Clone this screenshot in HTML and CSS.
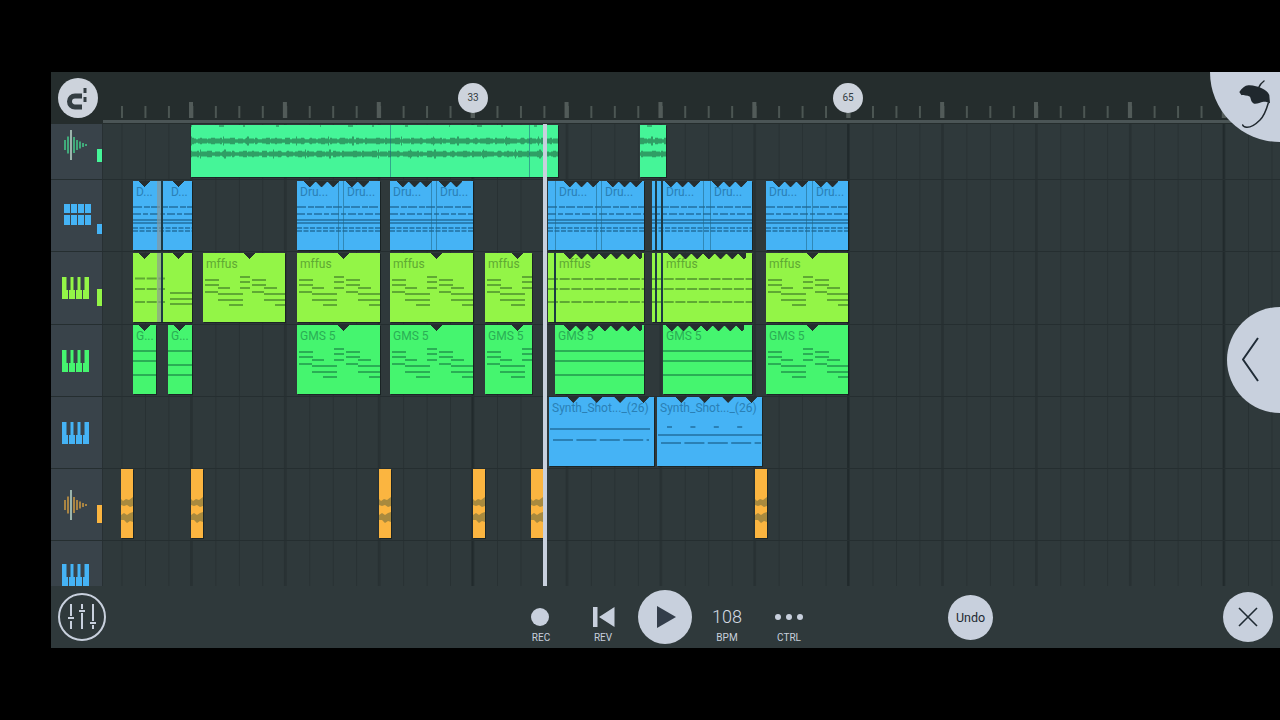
FILE: index.html
```html
<!DOCTYPE html>
<html lang="en">
<head>
<meta charset="utf-8">
<title>Playlist</title>
<link rel="stylesheet" href="styles.css">
</head>
<body>
<svg class="defs" aria-hidden="true">
  <defs>
    <g id="wave-band" fill="none" stroke="#2f9f65">
      <path d="M0 0H500" stroke-width="3.400"/>
      <path d="M0 0H500" stroke-width="5" stroke-dasharray="5 2 9 1 3 4 7 2 11 3"/>
      <path d="M0 0H500" stroke-width="6.500" stroke-dasharray="3 6 2 9 4 5 2 8 5 11"/>
      <path d="M0 0H500" stroke-width="9" stroke-dasharray="1 31 1 23 2 47"/>
    </g>
    <g id="wave">
      <path d="M0 1H500" fill="none" stroke="#2f9f65" stroke-width="1.500" stroke-dasharray="1 27 5 19 2 31 3 41"/>
      <use href="#wave-band" x="0" y="16"/>
      <use href="#wave-band" x="-23" y="29"/>
    </g>
    <g id="thump" fill="#a98a3e">
      <path d="M0 30L2 32L5 30L8 31L12 28V37L9 38L6 36L3 37L0 36Z"/>
      <path d="M0 46L3 44L6 46L9 44L12 43V53L9 52L6 54L3 51L0 51Z"/>
    </g>
    <g id="melody" fill="currentColor">
      <rect x="2" y="26" width="14" height="2"/><rect x="2" y="31" width="14" height="2"/><rect x="2" y="38" width="13" height="2"/>
      <rect x="15" y="34" width="12" height="2"/><rect x="15" y="40" width="25" height="2"/><rect x="15" y="46" width="25" height="2"/><rect x="26" y="51" width="14" height="2"/>
      <rect x="37" y="23" width="10" height="2"/><rect x="37" y="28" width="10" height="2"/><rect x="37" y="34" width="10" height="2"/>
      <rect x="49" y="26" width="14" height="2"/><rect x="49" y="31" width="14" height="2"/><rect x="49" y="38" width="12" height="2"/>
      <rect x="61" y="34" width="13" height="2"/><rect x="61" y="40" width="22" height="2"/><rect x="61" y="46" width="22" height="2"/><rect x="72" y="51" width="11" height="2"/>
    </g>
    <g id="three-dash" fill="none" stroke="currentColor" stroke-width="2" stroke-dasharray="10 1.7">
      <path d="M0 26H120"/><path d="M0 36H120"/><path d="M0 49H120"/>
    </g>
    <g id="three-solid" fill="none" stroke="currentColor" stroke-width="2">
      <path d="M0 26H120"/><path d="M0 36H120"/><path d="M0 50H120"/>
    </g>
    <g id="drums" fill="none" stroke="currentColor">
      <path d="M0 26H120" stroke-width="2" stroke-dasharray="9 2 6 1"/>
      <path d="M0 33H120" stroke-width="2.200" stroke-dasharray="8 2 5 2"/>
      <path d="M0 39H120" stroke-width="2"/>
      <path d="M0 42H120" stroke-width="2"/>
      <path d="M0 47H120" stroke-width="2" stroke-dasharray="5 1.5"/>
      <path d="M0 50H120" stroke-width="2" stroke-dasharray="5 1.5"/>
    </g>
    <g id="piano">
      <path d="M0 0H6V22H0ZM7 0H13V22H7ZM14 0H20V22H14ZM21 0H27V22H21Z" fill="currentColor"/>
      <path d="M4.500 0H8.500V13H4.500ZM11.500 0H15.500V13H11.500ZM18.500 0H22.500V13H18.500Z" fill="#39434a"/>
    </g>
    <g id="sample" fill="none" stroke="currentColor" stroke-width="1.400">
      <path d="M1 10V20M4 6.500V23.500M10 7V23M13 10V20M16 11.500V18.500M19 13V17M22 14V16"/>
      <path d="M7 0V30" stroke="#c4e4d4"/>
    </g>
  </defs>
</svg>

<main class="app">
  <header class="topbar">
    <div class="snapcell">
      <button class="snap" aria-label="Snap">
        <svg width="40" height="40" viewBox="0 0 40 40"><path d="M24 18H17A5.500 5.500 0 0 0 17 29H24" fill="none" stroke="#333d42" stroke-width="5"/><path d="M25.500 10H28.500V15H25.500ZM25.500 19H28.500V24H25.500Z" fill="#333d42"/></svg>
      </button>
    </div>
    <div class="ruler">
      <span class="marker m33">33</span>
      <span class="marker m65">65</span>
    </div>
  </header>

  <section class="tracks">
    <div class="row first inset">
      <div class="head h-first t-mint">
        <svg class="ico" width="24" height="30"><use href="#sample"/></svg>
        <i class="lvl" style="top:25px;height:13px"></i>
      </div>
      <div class="lane">
        <div class="clip mint" style="left:88px;width:367px">
          <svg class="notes"><use href="#wave"/></svg>
          <div class="seg" style="width:200px"></div><div class="seg" style="width:139px"></div><div class="seg last"></div>
        </div>
        <div class="clip mint" style="left:537px;width:26px">
          <svg class="notes"><use href="#wave" x="-150"/></svg>
        </div>
      </div>
    </div>

    <div class="row inset">
      <div class="head t-blue">
        <svg class="ico pads" width="27" height="21" viewBox="0 0 27 21"><path d="M0 0H6V9H0ZM7 0H13V9H7ZM14 0H20V9H14ZM21 0H27V9H21ZM0 11H6V21H0ZM7 11H13V21H7ZM14 11H20V21H14ZM21 11H27V21H21Z" fill="currentColor"/></svg>
        <i class="lvl" style="top:44px;height:10px"></i>
      </div>
      <div class="lane">
        <div class="clip blue" style="left:30px;width:59px">
          <svg class="notes"><use href="#drums"/></svg>
          <i class="zig" style="left:6px"></i><i class="zig" style="left:40px"></i>
          <div class="seg plain" style="width:24px"><b>D...</b></div><i class="fade"></i><i class="dark"></i><div class="seg plain" style="width:5px"></div><div class="seg plain last"><b>D...</b></div>
        </div>
        <div class="clip blue" style="left:194px;width:83px">
          <svg class="notes"><use href="#drums"/></svg>
          <i class="zig tri" style="left:7px"></i><i class="zig pair" style="left:49px"></i>
          <div class="seg" style="width:42px"><b>Dru...</b></div><div class="seg" style="width:5px"></div><div class="seg last"><b>Dru...</b></div>
        </div>
        <div class="clip blue" style="left:287px;width:83px">
          <svg class="notes"><use href="#drums"/></svg>
          <i class="zig tri" style="left:7px"></i><i class="zig pair" style="left:49px"></i>
          <div class="seg" style="width:42px"><b>Dru...</b></div><div class="seg" style="width:5px"></div><div class="seg last"><b>Dru...</b></div>
        </div>
        <div class="clip blue" style="left:445px;width:96px">
          <svg class="notes"><use href="#drums"/></svg>
          <i class="zig tri" style="left:16px"></i><i class="zig tri" style="left:59px"></i>
          <div class="seg" style="width:8px"></div><div class="seg" style="width:41px"><b>Dru...</b></div><div class="seg" style="width:5px"></div><div class="seg last"><b>Dru...</b></div>
        </div>
        <div class="clip blue" style="left:549px;width:100px">
          <svg class="notes"><use href="#drums"/></svg>
          <i class="zig tri" style="left:13px"></i><i class="zig tri" style="left:60px"></i>
          <div class="seg plain" style="width:3px"></div><i class="dark"></i><div class="seg plain" style="width:4px"></div><i class="dark"></i><div class="seg" style="width:41px"><b>Dru...</b></div><div class="seg" style="width:7px"></div><div class="seg last"><b>Dru...</b></div>
        </div>
        <div class="clip blue" style="left:663px;width:82px">
          <svg class="notes"><use href="#drums"/></svg>
          <i class="zig tri" style="left:7px"></i><i class="zig pair" style="left:49px"></i>
          <div class="seg" style="width:41px"><b>Dru...</b></div><div class="seg" style="width:6px"></div><div class="seg last"><b>Dru...</b></div>
        </div>
      </div>
    </div>

    <div class="row tall inset">
      <div class="head t-lime">
        <svg class="ico" width="27" height="22"><use href="#piano"/></svg>
        <i class="lvl" style="top:37px;height:17px"></i>
      </div>
      <div class="lane">
        <div class="clip lime" style="left:30px;width:59px">
          <svg class="notes"><path d="M2 25.500H32M2 36H32M2 49H32" fill="none" stroke="currentColor" stroke-width="2" stroke-dasharray="10 1.700"/><path d="M37 40H59M37 46H59M37 51H59" fill="none" stroke="currentColor" stroke-width="2"/></svg>
          <i class="zig" style="left:6px"></i><i class="zig" style="left:40px"></i>
          <div class="seg plain" style="width:24px"></div><i class="fade"></i><i class="dark"></i>
        </div>
        <div class="clip lime" style="left:100px;width:82px"><svg class="notes"><use href="#melody"/></svg><i class="zig" style="left:41px"></i><b>mffus</b></div>
        <div class="clip lime" style="left:194px;width:83px"><svg class="notes"><use href="#melody"/></svg><i class="zig" style="left:41px"></i><b>mffus</b></div>
        <div class="clip lime" style="left:287px;width:83px"><svg class="notes"><use href="#melody"/></svg><i class="zig" style="left:41px"></i><b>mffus</b></div>
        <div class="clip lime" style="left:382px;width:47px"><svg class="notes"><use href="#melody"/></svg><i class="zig" style="left:27px"></i><b>mffus</b></div>
        <div class="clip lime" style="left:445px;width:96px">
          <svg class="notes"><use href="#three-dash"/></svg>
          <i class="zig long" style="left:16px"></i>
          <div class="seg plain" style="width:6px"></div><i class="dark"></i><div class="seg plain last"><b>mffus</b></div>
        </div>
        <div class="clip lime" style="left:549px;width:100px">
          <svg class="notes"><use href="#three-dash"/></svg>
          <i class="zig long" style="left:16px"></i>
          <div class="seg plain" style="width:3px"></div><i class="dark"></i><div class="seg plain" style="width:4px"></div><i class="dark"></i><div class="seg plain last"><b>mffus</b></div>
        </div>
        <div class="clip lime" style="left:663px;width:82px"><svg class="notes"><use href="#melody"/></svg><i class="zig" style="left:41px"></i><b>mffus</b></div>
      </div>
    </div>

    <div class="row">
      <div class="head t-green">
        <svg class="ico" width="27" height="22"><use href="#piano"/></svg>
      </div>
      <div class="lane">
        <div class="clip green" style="left:30px;width:23px"><svg class="notes"><path d="M0 26H23M0 36H23M0 50H23" fill="none" stroke="currentColor" stroke-width="2"/></svg><i class="zig" style="left:6px"></i><b>G...</b></div>
        <div class="clip green" style="left:65px;width:24px"><svg class="notes"><path d="M0 26H24M0 40H24M0 50H24" fill="none" stroke="currentColor" stroke-width="2"/></svg><i class="zig" style="left:6px"></i><b>G...</b></div>
        <div class="clip green" style="left:194px;width:83px"><svg class="notes"><use href="#melody"/></svg><i class="zig" style="left:41px"></i><b>GMS 5</b></div>
        <div class="clip green" style="left:287px;width:83px"><svg class="notes"><use href="#melody"/></svg><i class="zig" style="left:41px"></i><b>GMS 5</b></div>
        <div class="clip green" style="left:382px;width:47px"><svg class="notes"><use href="#melody"/></svg><i class="zig" style="left:27px"></i><b>GMS 5</b></div>
        <div class="clip green" style="left:452px;width:89px"><svg class="notes"><use href="#three-solid"/></svg><i class="zig long" style="left:9px"></i><b>GMS 5</b></div>
        <div class="clip green" style="left:560px;width:89px"><svg class="notes"><use href="#three-solid"/></svg><i class="zig long" style="left:3px"></i><b>GMS 5</b></div>
        <div class="clip green" style="left:663px;width:82px"><svg class="notes"><use href="#melody"/></svg><i class="zig" style="left:41px"></i><b>GMS 5</b></div>
      </div>
    </div>

    <div class="row">
      <div class="head t-blue">
        <svg class="ico" width="27" height="22"><use href="#piano"/></svg>
      </div>
      <div class="lane">
        <div class="clip blue" style="left:446px;width:105px">
          <svg class="notes"><path d="M1 32H101" fill="none" stroke="currentColor" stroke-width="2"/><path d="M4 43H100" fill="none" stroke="currentColor" stroke-width="2" stroke-dasharray="20 3.400"/></svg>
          <i class="zig beats" style="left:18px"></i><b>Synth_Shot..._(26)</b>
        </div>
        <div class="clip blue" style="left:554px;width:105px">
          <svg class="notes"><path d="M10 30H100" fill="none" stroke="currentColor" stroke-width="2" stroke-dasharray="5 18.400"/><path d="M1 38H105" fill="none" stroke="currentColor" stroke-width="2"/><path d="M4 46H104" fill="none" stroke="currentColor" stroke-width="2" stroke-dasharray="20 3.400"/></svg>
          <i class="zig beats" style="left:18px"></i><b>Synth_Shot..._(26)</b>
        </div>
      </div>
    </div>

    <div class="row">
      <div class="head t-amber">
        <svg class="ico" width="24" height="30"><use href="#sample"/></svg>
        <i class="lvl" style="top:36px;height:18px"></i>
      </div>
      <div class="lane">
        <div class="clip amber" style="left:18px;width:12px"><svg class="notes"><use href="#thump"/></svg></div>
        <div class="clip amber" style="left:88px;width:12px"><svg class="notes"><use href="#thump"/></svg></div>
        <div class="clip amber" style="left:276px;width:12px"><svg class="notes"><use href="#thump"/></svg></div>
        <div class="clip amber" style="left:370px;width:12px"><svg class="notes"><use href="#thump"/></svg></div>
        <div class="clip amber" style="left:428px;width:12px"><svg class="notes"><use href="#thump"/></svg></div>
        <div class="clip amber" style="left:652px;width:12px"><svg class="notes"><use href="#thump"/></svg></div>
      </div>
    </div>

    <div class="row rest">
      <div class="head t-blue h-rest">
        <svg class="ico" width="27" height="22"><use href="#piano"/></svg>
      </div>
      <div class="lane"></div>
    </div>

    <i class="playhead"></i>
  </section>

  <footer class="bottombar">
    <button class="mixer" aria-label="Mixer">
      <svg width="44" height="44" viewBox="0 0 44 44" fill="none" stroke="#c8d0dd" stroke-width="2"><path d="M11 9V21M11 26V34M22 9V14M22 18V34M33 9V26M33 30V34"/><path d="M8 23H14M19 16H25M30 28H36"/></svg>
    </button>
    <div class="transport">
      <div class="tool"><span class="tool-ico"><i class="rec"></i></span><small>REC</small></div>
      <div class="tool"><span class="tool-ico rev"><svg width="22" height="20" viewBox="0 0 22 20"><path d="M0 0H4.500V20H0ZM21.500 0V20L6 10Z" fill="#c8d0dd"/></svg></span><small>REV</small></div>
      <div class="tool"><button class="play" aria-label="Play"><svg width="19" height="22" viewBox="0 0 19 22"><path d="M0 0L19 11L0 22Z" fill="#333d4a"/></svg></button></div>
      <div class="tool"><span class="tool-ico bpm">108</span><small>BPM</small></div>
      <div class="tool"><span class="tool-ico dots"><i></i><i></i><i></i></span><small>CTRL</small></div>
    </div>
    <button class="undo">Undo</button>
    <button class="close" aria-label="Close">
      <svg width="20" height="20" viewBox="0 0 20 20"><path d="M1 1L19 19M19 1L1 19" fill="none" stroke="#1f2a33" stroke-width="1.600"/></svg>
    </button>
  </footer>

  <aside class="fruit" aria-label="FL Studio">
    <svg width="36" height="54" viewBox="0 0 36 54"><path d="M1.300 14C4 10 7 7.500 10.300 7.300C15 7 20 8.500 23.700 10.300C27 11.500 30 14 31.300 17L32 25.300C30 24 27.500 23.500 25.300 23.700C22 24 18 27 15.300 25.300C13 24 13 21 12 18.700C9 17 6 18 3.300 17Z" fill="#20282e"/><path d="M26 3C23 5 21.500 7.500 20.300 10.300M30.300 25C28 33 25 39 22 42C17 47 13 49.500 8.700 49.300C6.500 49 5 48 4.700 47" fill="none" stroke="#20282e" stroke-width="1.500" stroke-linecap="round"/></svg>
  </aside>
  <button class="panel-toggle" aria-label="Open panel">
    <svg width="18" height="46" viewBox="0 0 18 46"><path d="M16 1L1 22.500L16 44" fill="none" stroke="#1f2b36" stroke-width="2"/></svg>
  </button>
</main>
</body>
</html>
```

FILE: styles.css
```css
* { box-sizing: border-box; }

html, body {
  margin: 0;
  height: 720px;
  overflow: hidden;
  background: #000;
  font-family: Roboto, "Liberation Sans", sans-serif;
}

button {
  padding: 0;
  border: 0;
  font: inherit;
  background: none;
}

.defs {
  display: block;
  width: 0;
  height: 0;
}

.app {
  position: relative;
  display: flex;
  flex-direction: column;
  width: 1229px;
  height: 576px;
  margin: 72px 0 0 51px;
  overflow: hidden;
  background: #2f393b;
}

/* top bar */
.topbar {
  display: flex;
  flex: none;
  height: 52px;
  background: #252d2d;
}

.snapcell {
  display: flex;
  flex: none;
  align-items: flex-start;
  width: 52px;
  padding: 6px 0 0 7px;
}

.snap {
  display: block;
  width: 40px;
  height: 40px;
  border-radius: 50%;
  background: #cdd3dc;
}

.snap svg { display: block; }

.ruler {
  position: relative;
  flex: 1;
  height: 51px;
  border-bottom: 3px solid #4b5556;
  background:
    linear-gradient(90deg, #525b59 0 4px, transparent 4px) 86px 30px / 93.900px 16px repeat-x,
    linear-gradient(90deg, #4c5653 0 2px, transparent 2px) 18px 34px / 23.475px 12px repeat-x;
}

.marker {
  position: absolute;
  top: 11px;
  width: 30px;
  height: 30px;
  border-radius: 50%;
  background: #cdd3dc;
  color: #333d42;
  font-size: 10px;
  line-height: 30px;
  text-align: center;
}

.m33 { left: 355px; }
.m65 { left: 730px; }

/* tracks */
.tracks {
  position: relative;
  display: flex;
  flex: 1;
  flex-direction: column;
  min-height: 0;
}

.row {
  display: flex;
  flex: none;
  height: 72px;
  border-bottom: 1px solid #252e30;
}

.row.first { height: 56px; }
.row.tall { height: 73px; }
.row.rest { flex: 1; height: auto; min-height: 0; border-bottom: 0; }

.head {
  position: relative;
  display: flex;
  flex: none;
  align-items: center;
  justify-content: center;
  width: 52px;
  padding-right: 2px;
  background: #39434a;
  border-right: 1px solid #283033;
}

.h-first { padding-bottom: 14px; }
.h-rest { align-items: flex-start; overflow: hidden; padding-top: 23px; }
.ico { display: block; flex: none; }
.ico.pads { margin: 0 0 3px 3px; }

.t-mint { color: #45d690; }
.t-blue { color: #45b3f5; }
.t-lime { color: #93f547; }
.t-green { color: #45f56f; }
.t-amber { color: #d9a040; }
.t-amber .lvl { background: #fbb540; }
.t-mint .lvl { background: #45f598; }

.lvl {
  position: absolute;
  left: 46px;
  width: 5px;
  background: currentColor;
}

.lane {
  position: relative;
  flex: 1;
  min-width: 0;
  background:
    linear-gradient(90deg, #212a2c 0 2px, transparent 2px) 368.500px 0 / 375.600px 100% repeat-x,
    linear-gradient(90deg, #283133 0 2px, transparent 2px) 87px 0 / 93.900px 100% repeat-x,
    linear-gradient(90deg, #283133 0 1px, transparent 1px) 18.500px 0 / 23.475px 100% repeat-x,
    #2f393b;
}

/* clips */
.clip {
  position: absolute;
  top: 0;
  display: flex;
  height: 69px;
  overflow: hidden;
  background: var(--fill);
  color: var(--ink);
  box-shadow: 1px 1px 0 rgba(15, 25, 25, .6);
}

.inset .clip { top: 1px; }
.first .clip { height: 52px; }

.mint { --fill: #45f598; --ink: #2f9f65; }
.blue { --fill: #45b3f5; --ink: #2a80b5; }
.lime { --fill: #93f547; --ink: #5fa933; }
.green { --fill: #45f56f; --ink: #2aae55; }
.amber { --fill: #fbb540; --ink: #a98a3e; }

.notes {
  position: absolute;
  inset: 0;
  display: block;
  width: 100%;
  height: 100%;
}

.clip b {
  position: relative;
  display: block;
  padding: 4px 0 0 3px;
  overflow: hidden;
  font-size: 12px;
  font-weight: 400;
  line-height: 14px;
  white-space: nowrap;
}

.seg {
  position: relative;
  flex: none;
  height: 100%;
  border-right: 1px solid rgba(32, 100, 130, .55);
}

.seg.plain { border-right: 0; }
.seg.last { flex: 1; border-right: 0; }

.fade {
  position: relative;
  flex: none;
  width: 4px;
  background: rgba(140, 150, 150, .65);
}

.dark {
  position: relative;
  flex: none;
  width: 2px;
  background: #1d3a44;
}

.zig {
  position: absolute;
  top: 0;
  z-index: 1;
  width: 11.700px;
  height: 6px;
  background: conic-gradient(from -45deg at 50% 100%, #262e30 90deg, transparent 0) 0 0 / 11.700px 6px repeat-x;
}

.zig.pair { width: 23.400px; }
.zig.tri { width: 35.100px; }
.zig.long { width: 78px; }
.zig.beats {
  width: 82px;
  background-size: 23.400px 6px;
  background-image: conic-gradient(from -45deg at 6px 100%, #262e30 90deg, transparent 0);
}

.playhead {
  position: absolute;
  top: 0;
  bottom: 0;
  left: 492px;
  width: 4px;
  background: #c8d0dd;
}

/* bottom bar */
.bottombar {
  display: flex;
  flex: none;
  align-items: center;
  height: 62px;
  padding: 0 7px;
  background: #2f393b;
}

.mixer {
  display: flex;
  flex: none;
  align-items: center;
  justify-content: center;
  width: 48px;
  height: 48px;
  border: 2px solid #c8d0dd;
  border-radius: 50%;
}

.transport {
  display: flex;
  flex: none;
  height: 62px;
  margin-left: 404px;
}

.tool {
  display: flex;
  flex: none;
  flex-direction: column;
  align-items: center;
  width: 62px;
  padding-top: 15px;
  color: #c8d0dd;
}

.tool-ico {
  display: flex;
  align-items: center;
  justify-content: center;
  height: 31px;
}

.tool-ico.rev { padding-left: 2px; }

.tool small {
  font-size: 10px;
  line-height: 12px;
}

.rec {
  display: block;
  width: 18px;
  height: 18px;
  margin-right: 2px;
  border-radius: 50%;
  background: #c8d0dd;
}

.play {
  display: flex;
  align-items: center;
  justify-content: center;
  width: 54px;
  height: 54px;
  margin-top: -11px;
  padding-left: 2px;
  border-radius: 50%;
  background: #c8d0dd;
}

.bpm {
  font-size: 18px;
  font-weight: 300;
  color: #d5dbe3;
}

.dots { gap: 5px; }

.dots i {
  display: block;
  width: 6px;
  height: 6px;
  border-radius: 50%;
  background: #c8d0dd;
}

.undo {
  flex: none;
  width: 45px;
  height: 45px;
  margin-left: 128px;
  border-radius: 50%;
  background: #c8d0dd;
  color: #1f2a33;
  font-size: 12.500px;
}

.close {
  display: flex;
  flex: none;
  align-items: center;
  justify-content: center;
  width: 50px;
  height: 50px;
  margin-left: auto;
  border-radius: 50%;
  background: #c8d0dd;
}

/* overlays */
.fruit {
  position: absolute;
  top: -70px;
  right: -70px;
  width: 140px;
  height: 140px;
  padding-top: 76px;
  border-radius: 50%;
  background: #c8d0dd;
}

.fruit svg {
  display: block;
  margin-left: 28px;
}

.panel-toggle {
  position: absolute;
  top: 235px;
  right: -53px;
  width: 106px;
  height: 106px;
  padding-left: 15px;
  border-radius: 50%;
  background: #c8d0dd;
  text-align: left;
}

.panel-toggle svg { display: block; }
```
